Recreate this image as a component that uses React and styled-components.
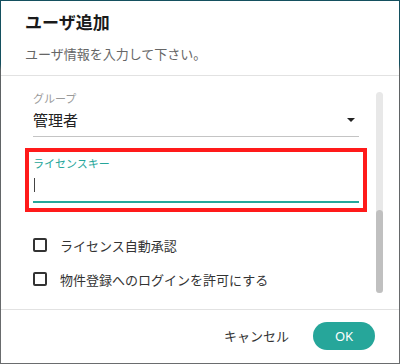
import React from "react";
import styled, { createGlobalStyle } from "styled-components";

const GlobalStyle = createGlobalStyle`
  html, body {
    margin: 0;
    padding: 0;
  }
  body {
    width: 400px;
    height: 364px;
    overflow: hidden;
    background: linear-gradient(180deg, #14505f 0px, #14505f 64px, #5e6264 70px, #6a6c6e 100%);
    font-family: "Noto Sans CJK JP", "Noto Sans", sans-serif;
  }
`;

const App = () => {
  return (
    <>
      <GlobalStyle />
      <Dialog>
        <Header>
          <Title>ユーザ追加</Title>
          <Subtitle>ユーザ情報を入力して下さい。</Subtitle>
        </Header>

        <Body>
          <Field>
            <Label>グループ</Label>
            <SelectRow>
              <Value>管理者</Value>
              <Caret />
            </SelectRow>
          </Field>

          <Highlight>
            <Field $focused>
              <Label $focused>ライセンスキー</Label>
              <InputRow>
                <Cursor />
              </InputRow>
            </Field>
          </Highlight>

          <Checks>
            <CheckRow>
              <Box />
              <CheckText>ライセンス自動承認</CheckText>
            </CheckRow>
            <CheckRow>
              <Box />
              <CheckText>物件登録へのログインを許可にする</CheckText>
            </CheckRow>
          </Checks>

          <Track>
            <Thumb />
          </Track>
        </Body>

        <Footer>
          <TextButton>キャンセル</TextButton>
          <OkButton>OK</OkButton>
        </Footer>
      </Dialog>
    </>
  );
};

export default App;

/* ================= STYLES ================= */

const Dialog = styled.div`
  margin: 1px;
  width: 398px;
  height: 362px;
  background: #ffffff;
  display: flex;
  flex-direction: column;
`;

const Header = styled.div`
  padding: 9px 24px 0;
  height: 75px;
  box-sizing: border-box;
  border-bottom: 1px solid #e2e2e2;
`;

const Title = styled.h2`
  margin: 0;
  font-size: 17px;
  font-weight: 700;
  line-height: 24px;
  color: #1a1a1a;
`;

const Subtitle = styled.p`
  margin: 11px 0 0;
  font-size: 13px;
  line-height: 18px;
  color: #666666;
`;

const Body = styled.div`
  position: relative;
  flex: 1;
  padding: 14px 0 0 32px;
  overflow: hidden;
`;

const Field = styled.div`
  width: 326px;
  display: flex;
  flex-direction: column;
`;

const Label = styled.span`
  font-size: 11px;
  line-height: 16px;
  color: ${(p) => (p.$focused ? "#26a69a" : "#9a9a9a")};
`;

const SelectRow = styled.div`
  display: flex;
  align-items: center;
  justify-content: space-between;
  height: 27px;
  padding-bottom: 3px;
  border-bottom: 1px solid #c4c4c4;
`;

const Value = styled.span`
  font-size: 15px;
  color: #222222;
`;

const Caret = styled.span`
  width: 0;
  height: 0;
  margin-right: 4px;
  border-left: 4px solid transparent;
  border-right: 4px solid transparent;
  border-top: 4px solid #222222;
`;

const Highlight = styled.div`
  margin: 11px 0 0 -8px;
  width: 342px;
  box-sizing: border-box;
  border: 4px solid #ff1a1a;
  padding: 3px 4px 5px;
`;

const InputRow = styled.div`
  height: 30px;
  display: flex;
  align-items: center;
  border-bottom: 2px solid #26a69a;
`;

const Cursor = styled.span`
  display: block;
  width: 1px;
  height: 14px;
  margin-left: 1px;
  margin-top: -2px;
  background: #444444;
`;

const Checks = styled.div`
  display: flex;
  flex-direction: column;
  gap: 14px;
  margin-top: 23px;
`;

const CheckRow = styled.label`
  display: flex;
  align-items: center;
  gap: 13px;
  height: 20px;
`;

const Box = styled.span`
  width: 14px;
  height: 14px;
  box-sizing: border-box;
  border: 2px solid #333333;
  border-radius: 2px;
`;

const CheckText = styled.span`
  font-size: 13px;
  color: #333333;
`;

const Track = styled.div`
  position: absolute;
  top: 16px;
  right: 16px;
  width: 7px;
  height: 201px;
  border-radius: 4px;
  background: #e8e8e8;
  display: flex;
  flex-direction: column;
  justify-content: flex-end;
`;

const Thumb = styled.div`
  height: 83px;
  border-radius: 4px;
  background: #c0c0c0;
`;

const Footer = styled.div`
  height: 54px;
  box-sizing: border-box;
  border-top: 1px solid #e2e2e2;
  display: flex;
  align-items: center;
  justify-content: flex-end;
  gap: 24px;
  padding: 0 24px 2px;
`;

const TextButton = styled.button`
  border: none;
  background: none;
  padding: 0;
  font-family: "Noto Sans CJK JP", sans-serif;
  font-size: 13px;
  color: #333333;
`;

const OkButton = styled.button`
  width: 62px;
  height: 28px;
  border: none;
  border-radius: 14px;
  background: #26a69a;
  color: #ffffff;
  font-family: "Noto Sans", sans-serif;
  font-size: 13px;
`;
